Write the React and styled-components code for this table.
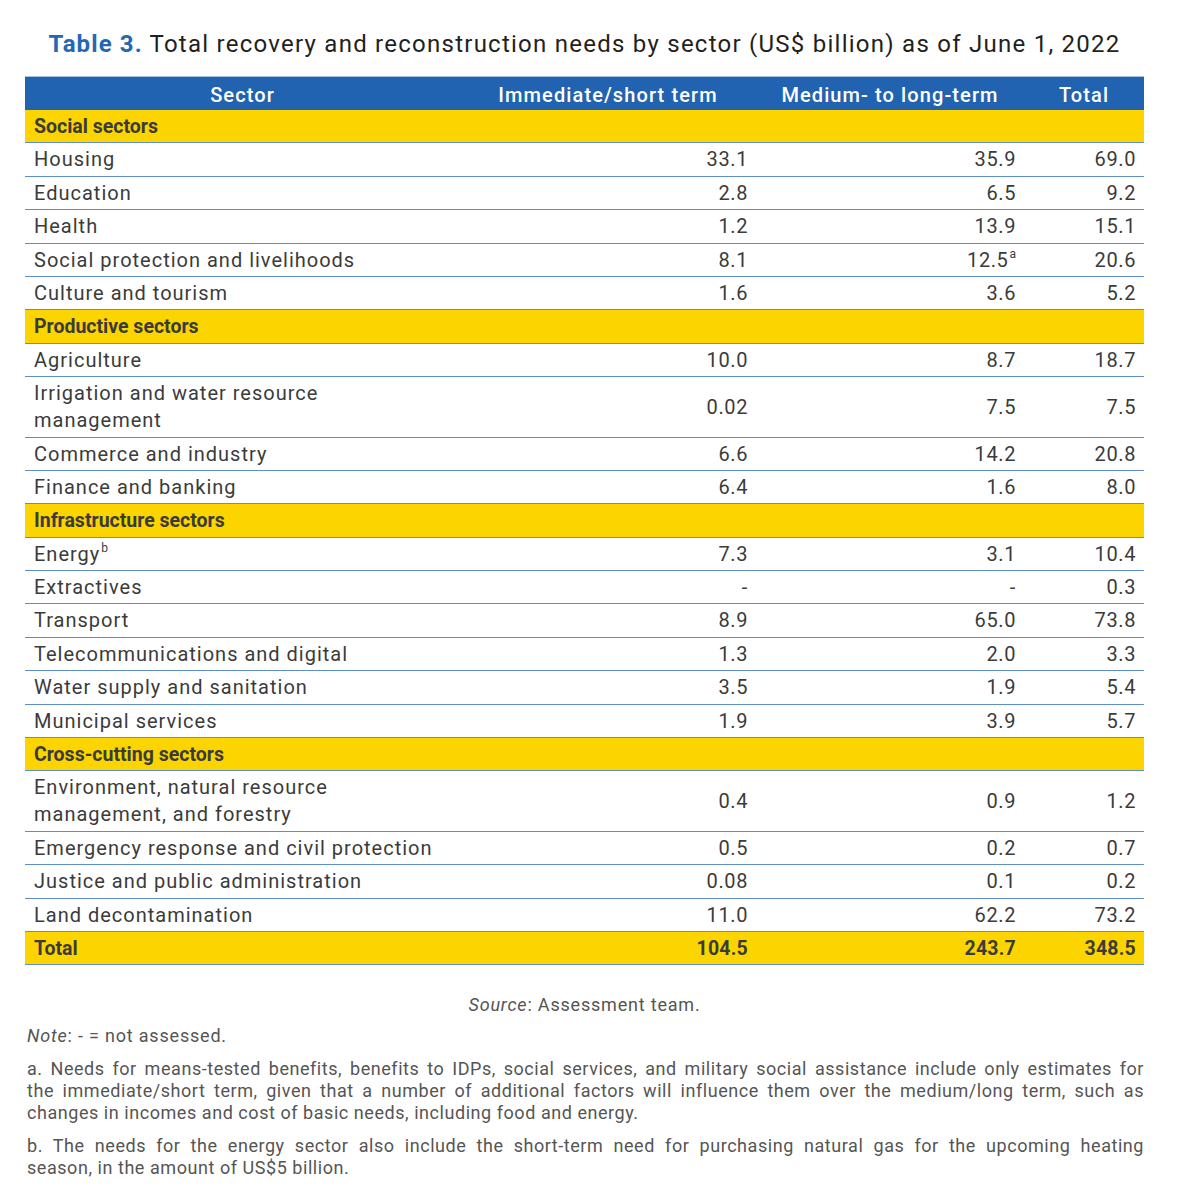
import React from 'react';
import styled, { createGlobalStyle } from 'styled-components';

const rows = [
  { group: 'Social sectors' },
  { name: 'Housing', a: '33.1', b: '35.9', t: '69.0' },
  { name: 'Education', a: '2.8', b: '6.5', t: '9.2' },
  { name: 'Health', a: '1.2', b: '13.9', t: '15.1' },
  { name: 'Social protection and livelihoods', a: '8.1', b: '12.5', bSup: 'a', t: '20.6' },
  { name: 'Culture and tourism', a: '1.6', b: '3.6', t: '5.2' },
  { group: 'Productive sectors' },
  { name: 'Agriculture', a: '10.0', b: '8.7', t: '18.7' },
  { name: 'Irrigation and water resource management', a: '0.02', b: '7.5', t: '7.5' },
  { name: 'Commerce and industry', a: '6.6', b: '14.2', t: '20.8' },
  { name: 'Finance and banking', a: '6.4', b: '1.6', t: '8.0' },
  { group: 'Infrastructure sectors' },
  { name: 'Energy', nameSup: 'b', a: '7.3', b: '3.1', t: '10.4' },
  { name: 'Extractives', a: '-', b: '-', t: '0.3' },
  { name: 'Transport', a: '8.9', b: '65.0', t: '73.8' },
  { name: 'Telecommunications and digital', a: '1.3', b: '2.0', t: '3.3' },
  { name: 'Water supply and sanitation', a: '3.5', b: '1.9', t: '5.4' },
  { name: 'Municipal services', a: '1.9', b: '3.9', t: '5.7' },
  { group: 'Cross-cutting sectors' },
  { name: 'Environment, natural resource management, and forestry', a: '0.4', b: '0.9', t: '1.2' },
  { name: 'Emergency response and civil protection', a: '0.5', b: '0.2', t: '0.7' },
  { name: 'Justice and public administration', a: '0.08', b: '0.1', t: '0.2' },
  { name: 'Land decontamination', a: '11.0', b: '62.2', t: '73.2' },
];

const noteA = [
  'a. Needs for means-tested benefits, benefits to IDPs, social services, and military social assistance include only estimates for',
  'the immediate/short term, given that a number of additional factors will influence them over the medium/long term, such as',
  'changes in incomes and cost of basic needs, including food and energy.',
];

const noteB = [
  'b. The needs for the energy sector also include the short-term need for purchasing natural gas for the upcoming heating',
  'season, in the amount of US$5 billion.',
];

const NoteBlock = ({ lines }) => (
  <Note>
    {lines.map((line, i) => (
      <NoteLine key={i} $last={i === lines.length - 1}>
        {line}
      </NoteLine>
    ))}
  </Note>
);

const App = () => {
  return (
    <>
      <GlobalStyle />
      <Page>
        <Title>
          <TitleLabel>Table 3.</TitleLabel> Total recovery and reconstruction needs by sector (US$ billion) as of June 1, 2022
        </Title>
        <Table>
          <HeadCell>Sector</HeadCell>
          <HeadCell>Immediate/short term</HeadCell>
          <HeadCell>Medium- to long-term</HeadCell>
          <HeadCell>Total</HeadCell>
          {rows.map((row, i) =>
            row.group ? (
              <Row key={i} $yellow>
                <NameCell $bold>{row.group}</NameCell>
                <NumCell />
                <NumCell />
                <NumCell />
              </Row>
            ) : (
              <Row key={i}>
                <NameCell>
                  {row.name}
                  {row.nameSup && <Sup>{row.nameSup}</Sup>}
                </NameCell>
                <NumCell>{row.a}</NumCell>
                <NumCell>
                  {row.b}
                  {row.bSup && <Sup>{row.bSup}</Sup>}
                </NumCell>
                <NumCell>{row.t}</NumCell>
              </Row>
            )
          )}
          <Row $yellow>
            <NameCell $bold>Total</NameCell>
            <NumCell $bold>104.5</NumCell>
            <NumCell $bold>243.7</NumCell>
            <NumCell $bold>348.5</NumCell>
          </Row>
        </Table>
        <Footer>
          <Source>
            <em>Source</em>: Assessment team.
          </Source>
          <Note>
            <em>Note</em>: - = not assessed.
          </Note>
          <NoteBlock lines={noteA} />
          <NoteBlock lines={noteB} />
        </Footer>
      </Page>
    </>
  );
};

export default App;

const GlobalStyle = createGlobalStyle`
  body {
    margin: 0;
    background: #ffffff;
    font-family: Roboto, "Liberation Sans", sans-serif;
    color: #3b3b3b;
  }
`;

const Page = styled.div`
  width: 1188px;
  padding: 29px 44px 14px 25px;
  box-sizing: border-box;
`;

const Title = styled.h1`
  margin: 0 0 16px;
  text-align: center;
  font-size: 24px;
  line-height: 31px;
  font-weight: 400;
  letter-spacing: 1.25px;
  white-space: nowrap;
  color: #231f20;
`;

const TitleLabel = styled.span`
  color: #2468b4;
  font-weight: 700;
  letter-spacing: 1.1px;
`;

const Table = styled.div`
  display: grid;
  grid-template-columns: 435px 296px 268px 120px;
  font-size: 20px;
`;

const HeadCell = styled.div`
  background: #2163b0;
  color: #ffffff;
  font-weight: 500;
  letter-spacing: 1.1px;
  text-align: center;
  height: 34px;
  line-height: 37px;
  border-top: 1px solid #a9c2e2;
  box-sizing: border-box;
`;

const Row = styled.div`
  display: contents;

  & > div {
    background: ${(p) => (p.$yellow ? '#fcd500' : '#ffffff')};
  }
`;

const Cell = styled.div`
  display: flex;
  align-items: center;
  line-height: 27px;
  padding: 3px 8px 2.4px 9px;
  border-bottom: 1px solid #5f8fca;
  font-weight: ${(p) => (p.$bold ? 700 : 400)};
  font-size: ${(p) => (p.$bold ? '19.5px' : '20px')};
`;

const NameCell = styled(Cell)`
  letter-spacing: ${(p) => (p.$bold ? '0' : '1px')};
`;

const NumCell = styled(Cell)`
  justify-content: flex-end;
  letter-spacing: ${(p) => (p.$bold ? '0.2px' : '0.6px')};
`;

const Sup = styled.span`
  font-size: 12px;
  line-height: 1;
  letter-spacing: 0;
  position: relative;
  top: -6px;
  margin-left: 1px;
`;

const Footer = styled.div`
  margin-top: 29px;
  color: #555555;
  font-size: 18px;
  line-height: 22px;
`;

const Source = styled.p`
  margin: 0 0 9px;
  text-align: center;
  letter-spacing: 0.8px;
`;

const Note = styled.div`
  margin: 0 0 11px 2px;
  letter-spacing: 0.8px;
`;

const NoteLine = styled.div`
  letter-spacing: 0.55px;
  text-align: ${(p) => (p.$last ? 'left' : 'justify')};
  text-align-last: ${(p) => (p.$last ? 'left' : 'justify')};
`;
